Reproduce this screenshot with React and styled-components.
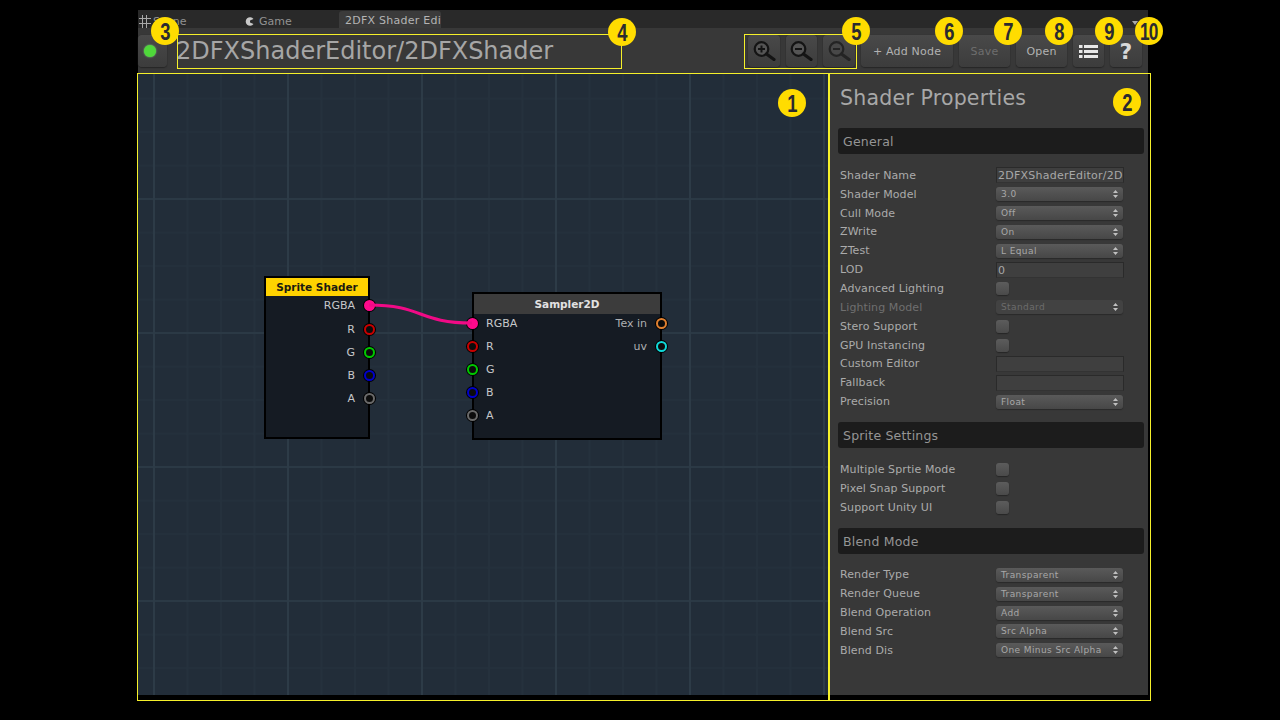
import React from "react";
import styled, { createGlobalStyle } from "styled-components";

const Global = createGlobalStyle`
  html, body { margin: 0; padding: 0; background: #000; }
  body { font-family: "DejaVu Sans", sans-serif; }
  #root { width: 1280px; height: 720px; overflow: hidden; }
`;

const Page = styled.div`
  position: relative;
  width: 1280px;
  height: 720px;
  padding: 10px 0 0 138px;
  box-sizing: border-box;
  background: #000;
`;
const Win = styled.div`
  width: 1010px;
  height: 685px;
  display: flex;
  flex-direction: column;
  background: #383838;
`;
const TabBar = styled.div`
  position: relative;
  height: 18px;
  flex: none;
  display: flex;
  align-items: flex-end;
  background: #292929;
`;
const Tab = styled.div`
  display: flex;
  align-items: center;
  gap: ${p => p.$gap || 4}px;
  width: ${p => p.$w}px;
  margin-left: ${p => p.$ml}px;
  height: 17px;
  box-sizing: border-box;
  font-size: 11px;
  letter-spacing: ${p => (p.$active ? "0.25px" : "0")};
  color: ${p => (p.$active ? "#b4b4b4" : "#929292")};
  padding: ${p => (p.$active ? "1px 0 0 6px" : "3px 0 0 0")};
  border-radius: 3px 3px 0 0;
  background: ${p => (p.$active ? "#3b3b3b" : "transparent")};
  white-space: nowrap;
  overflow: hidden;
`;
const MenuCaret = styled.div`
  position: absolute;
  right: 10px;
  top: 11px;
  width: 0;
  height: 0;
  border-left: 3px solid transparent;
  border-right: 3px solid transparent;
  border-top: 4px solid #aaa;
`;
const Toolbar = styled.div`
  height: 45px;
  flex: none;
  display: flex;
  align-items: flex-start;
  padding-top: 7px;
  box-sizing: border-box;
`;
const ToolBtn = styled.div`
  flex: none;
  width: ${p => p.$w}px;
  height: 32px;
  margin-left: ${p => p.$ml || 0}px;
  display: flex;
  align-items: center;
  justify-content: center;
  box-sizing: border-box;
  border-radius: 4px;
  background: linear-gradient(#494949, #3c3c3c);
  box-shadow: 0 1px 1px #262626, 0 0 1px #2a2a2a;
  font-size: 11px;
  letter-spacing: 0.2px;
  color: ${p => (p.$off ? "#6e6e6e" : "#b2b2b2")};
`;
const Title = styled.div`
  width: 572px;
  margin-left: 9px;
  font-size: 24px;
  line-height: 33px;
  color: #a6a6a6;
  white-space: nowrap;
`;
const Main = styled.div`
  flex: 1;
  display: flex;
  gap: 2px;
  min-height: 0;
`;
const Canvas = styled.div`
  position: relative;
  width: 690px;
  flex: none;
  overflow: hidden;
  background-color: #222d39;
  background-image:
    linear-gradient(90deg, #2d3b47 0, #2d3b47 2px, transparent 2px),
    linear-gradient(0deg, #2b3945 0, #2b3945 2px, transparent 2px),
    linear-gradient(90deg, #25313d 0, #25313d 2px, transparent 2px),
    linear-gradient(0deg, #24303c 0, #24303c 2px, transparent 2px),
    radial-gradient(circle, #28343f 0, #28343f 1px, transparent 1.2px);
  background-size: 134px 134px, 134px 134px, 33.5px 33.5px, 33.5px 33.5px, 33.5px 33.5px;
  background-position: 15px 0, 0 -7px, 15px 0, 0 -7px, -1.5px 9px;
`;
const Wire = styled.svg`
  position: absolute;
  left: 0;
  top: 0;
  pointer-events: none;
`;
const Node = styled.div`
  position: absolute;
  left: ${p => p.$x}px;
  top: ${p => p.$y}px;
  width: ${p => p.$w}px;
  height: ${p => p.$h}px;
  box-sizing: border-box;
  border: 2px solid #000;
  background: #151b23;
`;
const NodeHead = styled.div`
  height: ${p => p.$h}px;
  line-height: ${p => p.$h + 1}px;
  text-align: center;
  font-size: 10.5px;
  font-weight: bold;
  color: ${p => (p.$yellow ? "#1c1a10" : "#e2e2e2")};
  background: ${p => (p.$yellow ? "#ffd200" : "#3c3c3c")};
`;
const PortList = styled.div`
  display: flex;
  flex-direction: column;
  margin-top: ${p => p.$shift}px;
`;
const PortRow = styled.div`
  position: relative;
  height: ${p => p.$h || 23}px;
  line-height: 23px;
  font-size: 11px;
  color: ${p => (p.$dim ? "#aeb0b2" : "#c6c8ca")};
  display: flex;
  justify-content: ${p => p.$justify};
  padding: ${p => p.$pad};
`;
const Port = styled.span`
  position: absolute;
  ${p => p.$side}: -7px;
  top: 5.5px;
  width: 11px;
  height: 11px;
  box-sizing: border-box;
  border-radius: 50%;
  border: 2.5px solid ${p => p.$c};
  background: ${p => (p.$fill ? p.$c : "#0c0c0c")};
  box-shadow: 0 0 0 1px #000;
`;
const NodeBody = styled.div`
  display: flex;
  justify-content: space-between;
`;
const Column = styled.div`
  flex: 1;
`;
const Panel = styled.div`
  flex: 1;
  display: flex;
  flex-direction: column;
  background: #383838;
  padding: 0 4px 0 8px;
`;
const PanelTitle = styled.div`
  font-size: 20.5px;
  line-height: 26px;
  color: #a8a8a8;
  margin: 12px 0 17px 2px;
  letter-spacing: 0.2px;
`;
const SectionBar = styled.div`
  flex: none;
  height: 26px;
  line-height: 27px;
  padding-left: 5px;
  border-radius: 3px;
  background: #1c1c1c;
  font-size: 12.5px;
  letter-spacing: 0.2px;
  color: #959595;
  margin-top: ${p => p.$mt || 0}px;
  margin-bottom: ${p => p.$mb}px;
`;
const Row = styled.div`
  flex: none;
  height: 18.85px;
  display: flex;
  align-items: center;
  padding-left: 2px;
`;
const Label = styled.div`
  width: 156px;
  flex: none;
  font-size: 11px;
  letter-spacing: 0.1px;
  color: ${p => (p.$off ? "#6f6f6f" : "#ababab")};
`;
const Field = styled.div`
  width: 128px;
  height: 16px;
  box-sizing: border-box;
  line-height: 15px;
  font-size: 11px;
  letter-spacing: 0.25px;
  padding-left: 1px;
  overflow: hidden;
  white-space: nowrap;
  color: #a8a8a8;
  background: #3f3f3f;
  border: 1px solid #2a2a2a;
  border-bottom-color: #333;
`;
const Select = styled.div`
  width: 127px;
  height: 14px;
  box-sizing: border-box;
  margin-right: 1px;
  display: flex;
  align-items: center;
  justify-content: space-between;
  padding: 0 5px 0 5px;
  font-size: 9px;
  letter-spacing: 0.4px;
  border-radius: 3px;
  color: ${p => (p.$off ? "#6c6c6c" : "#a8a8a8")};
  background: ${p => (p.$off ? "#424242" : "linear-gradient(#5a5a5a, #474747)")};
  box-shadow: 0 1px 1px #2a2a2a;
`;
const Check = styled.div`
  width: 13px;
  height: 13px;
  border-radius: 3px;
  background: linear-gradient(#5c5c5c, #4a4a4a);
  box-shadow: 0 1px 1px #262626;
`;
const Updown = styled.svg`
  flex: none;
`;
const Annot = styled.div`
  position: absolute;
  left: ${p => p.$x}px;
  top: ${p => p.$y}px;
  width: ${p => p.$w}px;
  height: ${p => p.$h}px;
  box-sizing: border-box;
  border: 1px solid #f5f02a;
  pointer-events: none;
`;
const Badge = styled.div`
  position: absolute;
  left: ${p => p.$x - 14}px;
  top: ${p => p.$y - 14}px;
  width: 28px;
  height: 28px;
  border-radius: 50%;
  background: #ffdc00;
  color: #2a2a30;
  display: flex;
  align-items: center;
  justify-content: center;
`;
const BadgeText = styled.span`
  font-family: "Liberation Sans", sans-serif;
  font-weight: bold;
  font-size: 23px;
  line-height: 28px;
  letter-spacing: ${p => (p.$tight ? "-1px" : "0")};
  transform: scale(${p => (p.$tight ? 0.75 : 0.8)}, 1.08);
`;
const Dot = styled.div`
  width: 12px;
  height: 12px;
  margin-right: 5px;
  border-radius: 50%;
  background: #4fd83a;
  box-shadow: 0 0 2px #7fe07a;
`;
const Help = styled.span`
  font-size: 22px;
  font-weight: bold;
  color: #d8d8d8;
`;

const Arrows = () => (
  <Updown width="5" height="8" viewBox="0 0 5 8">
    <path d="M2.5 0 L5 3 H0 Z M2.5 8 L5 5 H0 Z" fill="#c0c0c0" />
  </Updown>
);

const Zoom = ({ kind, dim }) => (
  <svg width="23" height="20" viewBox="0 0 23 20" fill="none" stroke={dim ? "#242424" : "#141414"}>
    <circle cx="8.5" cy="8" r="6.8" strokeWidth="2.2" fill={dim ? "#484848" : "#555"} />
    <path d="M13.5 13 L21 18.5" strokeWidth="3.2" strokeLinecap="round" />
    <path d="M5 8 H12" strokeWidth="2" />
    {kind === "plus" && <path d="M8.5 4.5 V11.5" strokeWidth="2" />}
  </svg>
);

const ListIcon = () => (
  <svg width="19" height="15" viewBox="0 0 19 15" fill="#e8e8e8">
    <rect x="0" y="1" width="3.5" height="3" />
    <rect x="5" y="1" width="14" height="3" />
    <rect x="0" y="6" width="3.5" height="3" />
    <rect x="5" y="6" width="14" height="3" />
    <rect x="0" y="11" width="3.5" height="3" />
    <rect x="5" y="11" width="14" height="3" />
  </svg>
);

const SceneIcon = () => (
  <svg width="12" height="13" viewBox="0 0 12 13" stroke="#a8a8a8" strokeWidth="1" style={{ flex: "none" }}>
    <path d="M3.5 0 V13 M7.5 0 V13 M0 3.5 H12 M0 8.5 H12" />
  </svg>
);

const GameIcon = () => (
  <svg width="9" height="9" viewBox="0 0 9 9" style={{ flex: "none" }}>
    <path d="M8.5 2 A4.3 4.3 0 1 0 8.5 7 L5 5.5 V3.5 Z" fill="#c8c8c8" />
  </svg>
);

const ports = [
  ["RGBA", "#ff0a8c", true],
  ["R", "#c80000"],
  ["G", "#00c800"],
  ["B", "#0000c8"],
  ["A", "#6a6a6a"],
];

const general = [
  ["Shader Name", "field", "2DFXShaderEditor/2D"],
  ["Shader Model", "select", "3.0"],
  ["Cull Mode", "select", "Off"],
  ["ZWrite", "select", "On"],
  ["ZTest", "select", "L Equal"],
  ["LOD", "field", "0"],
  ["Advanced Lighting", "check"],
  ["Lighting Model", "select", "Standard", true],
  ["Stero Support", "check"],
  ["GPU Instancing", "check"],
  ["Custom Editor", "field", ""],
  ["Fallback", "field", ""],
  ["Precision", "select", "Float"],
];
const sprite = [
  ["Multiple Sprtie Mode", "check"],
  ["Pixel Snap Support", "check"],
  ["Support Unity UI", "check"],
];
const blend = [
  ["Render Type", "select", "Transparent"],
  ["Render Queue", "select", "Transparent"],
  ["Blend Operation", "select", "Add"],
  ["Blend Src", "select", "Src Alpha"],
  ["Blend Dis", "select", "One Minus Src Alpha"],
];

const Rows = ({ items }) =>
  items.map(([label, type, value, off]) => (
    <Row key={label}>
      <Label $off={off}>{label}</Label>
      {type === "field" && <Field>{value}</Field>}
      {type === "check" && <Check />}
      {type === "select" && (
        <Select $off={off}>
          <span>{value}</span>
          <Arrows />
        </Select>
      )}
    </Row>
  ));

const badges = [
  ["1", 792, 103], ["2", 1127, 102], ["3", 165, 31], ["4", 622, 32], ["5", 856, 31],
  ["6", 949, 31], ["7", 1008, 31], ["8", 1059, 31], ["9", 1109, 31], ["10", 1149, 31, true],
];

export default function App() {
  return (
    <Page>
      <Global />
      <Win>
        <TabBar>
          <Tab $w={60} $ml={1} $gap={2}><SceneIcon />Scene</Tab>
          <Tab $w={60} $ml={46} $gap={5}><GameIcon />Game</Tab>
          <Tab $w={102} $ml={34} $active>2DFX Shader Edi</Tab>
          <MenuCaret />
        </TabBar>
        <Toolbar>
          <ToolBtn $w={29}><Dot /></ToolBtn>
          <Title>2DFXShaderEditor/2DFXShader</Title>
          <ToolBtn $w={32}><Zoom kind="plus" /></ToolBtn>
          <ToolBtn $w={31} $ml={6}><Zoom /></ToolBtn>
          <ToolBtn $w={32} $ml={6}><Zoom dim /></ToolBtn>
          <ToolBtn $w={92} $ml={6}>+ Add Node</ToolBtn>
          <ToolBtn $w={51} $ml={6} $off>Save</ToolBtn>
          <ToolBtn $w={51} $ml={6}>Open</ToolBtn>
          <ToolBtn $w={31} $ml={6}><ListIcon /></ToolBtn>
          <ToolBtn $w={32} $ml={6}><Help>?</Help></ToolBtn>
        </Toolbar>
        <Main>
          <Canvas>
            <Node $x={126} $y={203} $w={106} $h={163}>
              <NodeHead $h={18} $yellow>Sprite Shader</NodeHead>
              <PortList $shift={-2}>
                {ports.map(([n, c, fill], i) => (
                  <PortRow key={n} $h={i === 0 ? 24 : 23} $justify="flex-end" $pad="0 13px 0 0">
                    {n}
                    <Port $side="right" $c={c} $fill={fill} />
                  </PortRow>
                ))}
              </PortList>
            </Node>
            <Node $x={334} $y={219} $w={190} $h={148}>
              <NodeHead $h={20}>Sampler2D</NodeHead>
              <NodeBody>
                <Column>
                  <PortList $shift={-2}>
                    {ports.map(([n, c, fill]) => (
                      <PortRow key={n} $justify="flex-start" $pad="0 0 0 12px">
                        {n}
                        <Port $side="left" $c={c} $fill={fill} />
                      </PortRow>
                    ))}
                  </PortList>
                </Column>
                <Column>
                  <PortList $shift={-2}>
                    <PortRow $justify="flex-end" $pad="0 13px 0 0" $dim>
                      Tex in
                      <Port $side="right" $c="#e08030" />
                    </PortRow>
                    <PortRow $justify="flex-end" $pad="0 13px 0 0" $dim>
                      uv
                      <Port $side="right" $c="#10d8d8" />
                    </PortRow>
                  </PortList>
                </Column>
              </NodeBody>
            </Node>
            <Wire width="690" height="622" viewBox="0 0 690 622">
              <path d="M231 232 C 285 232, 280 250, 334 250" fill="none" stroke="#f00a86" strokeWidth="3" />
            </Wire>
          </Canvas>
          <Panel>
            <PanelTitle>Shader Properties</PanelTitle>
            <SectionBar $mb={12}>General</SectionBar>
            <Rows items={general} />
            <SectionBar $mt={11} $mb={12}>Sprite Settings</SectionBar>
            <Rows items={sprite} />
            <SectionBar $mt={11} $mb={12}>Blend Mode</SectionBar>
            <Rows items={blend} />
          </Panel>
        </Main>
      </Win>
      <Annot $x={137} $y={73} $w={692} $h={628} />
      <Annot $x={829} $y={73} $w={322} $h={628} />
      <Annot $x={177} $y={34} $w={445} $h={35} />
      <Annot $x={744} $y={34} $w={113} $h={35} />
      {badges.map(([t, x, y, tight]) => (
        <Badge key={t} $x={x} $y={y}><BadgeText $tight={tight}>{t}</BadgeText></Badge>
      ))}
    </Page>
  );
}
